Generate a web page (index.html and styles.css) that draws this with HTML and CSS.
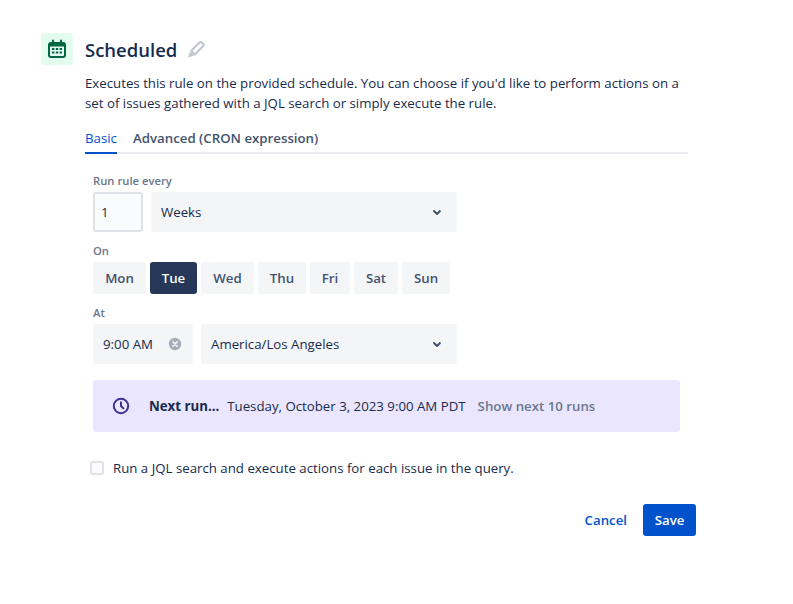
FILE: index.html
```html
<!DOCTYPE html>
<html lang="en">
<head>
<meta charset="utf-8">
<title>Scheduled</title>
<link rel="stylesheet" href="styles.css">
</head>
<body>
<main class="page">
  <header class="head">
    <div class="head-icon">
      <svg width="24" height="24" viewBox="0 0 24 24"><path fill="#006644" fill-rule="evenodd" d="M7 3.500a1 1 0 0 1 2 0V5h6V3.500a1 1 0 0 1 2 0V5h1a3 3 0 0 1 3 3v10a3 3 0 0 1-3 3H6a3 3 0 0 1-3-3V8a3 3 0 0 1 3-3h1V3.500zM5 9.500V18a1 1 0 0 0 1 1h12a1 1 0 0 0 1-1V9.500H5z"/><path fill="#006644" d="M7 11h2.400v2H7zM10.800 11h2.400v2h-2.400zM14.600 11H17v2h-2.400zM7 14.500h2.400v2H7zM10.800 14.500h2.400v2h-2.400zM14.600 14.500H17v2h-2.400z"/></svg>
    </div>
    <h1 class="title">Scheduled</h1>
    <svg class="pencil" width="18" height="18" viewBox="1 1.500 15 15"><path fill="none" stroke="#c1c7d0" stroke-width="1.800" stroke-linejoin="round" d="M4.500 10.500l7-7a1.200 1.200 0 0 1 1.700 0l1.300 1.300a1.200 1.200 0 0 1 0 1.700l-7 7z"/><path fill="#c1c7d0" d="M3.600 11l3.400 3.400-5.200 1.800z"/></svg>
  </header>
  <p class="desc">Executes this rule on the provided schedule. You can choose if you'd like to perform actions on a set of issues gathered with a JQL search or simply execute the rule.</p>
  <nav class="tabs">
    <span class="tab tab-active">Basic</span>
    <span class="tab">Advanced (CRON expression)</span>
  </nav>
  <section class="form">
    <div class="label label-first">Run rule every</div>
    <div class="row">
      <div class="num">1</div>
      <div class="select select-fill">Weeks
        <svg class="chev" width="24" height="24" viewBox="0 0 24 24"><path fill="#42526e" d="M8.300 10.300a1 1 0 0 1 1.400 0L12 12.600l2.300-2.300a1 1 0 0 1 1.400 1.400l-3 3a1 1 0 0 1-1.400 0l-3-3a1 1 0 0 1 0-1.400z"/></svg>
      </div>
    </div>
    <div class="label">On</div>
    <div class="days">
      <span class="day day-mon">Mon</span>
      <span class="day day-on">Tue</span>
      <span class="day day-wed">Wed</span>
      <span class="day day-thu">Thu</span>
      <span class="day day-fri">Fri</span>
      <span class="day day-sat">Sat</span>
      <span class="day day-sun">Sun</span>
    </div>
    <div class="label">At</div>
    <div class="row">
      <div class="select time">9:00 AM
        <svg class="clear" width="16" height="16" viewBox="0 0 16 16"><circle cx="8" cy="8" r="6.200" fill="#a5adba"/><path stroke="#f4f5f7" stroke-width="1.600" stroke-linecap="round" d="M5.900 5.900l4.200 4.200M10.100 5.900l-4.200 4.200"/></svg>
      </div>
      <div class="select select-fill">America/Los Angeles
        <svg class="chev" width="24" height="24" viewBox="0 0 24 24"><path fill="#42526e" d="M8.300 10.300a1 1 0 0 1 1.400 0L12 12.600l2.300-2.300a1 1 0 0 1 1.400 1.400l-3 3a1 1 0 0 1-1.400 0l-3-3a1 1 0 0 1 0-1.400z"/></svg>
      </div>
    </div>
    <div class="next">
      <svg class="clock" width="24" height="24" viewBox="0 0 24 24"><circle cx="12" cy="12" r="7.200" fill="none" stroke="#403294" stroke-width="2"/><path fill="none" stroke="#403294" stroke-width="2" stroke-linecap="round" stroke-linejoin="round" d="M12 8.200V12l2.400 2.400"/></svg>
      <strong class="next-label">Next run...</strong>
      <span class="next-date">Tuesday, October 3, 2023 9:00 AM PDT</span>
      <span class="next-link">Show next 10 runs</span>
    </div>
    <label class="check"><span class="box"></span>Run a JQL search and execute actions for each issue in the query.</label>
  </section>
  <footer class="actions">
    <span class="cancel">Cancel</span>
    <span class="save">Save</span>
  </footer>
</main>
</body>
</html>
```
FILE: styles.css
```css
* { box-sizing: border-box; }
html, body { margin: 0; padding: 0; background: #fff; }
body {
  font-family: "Open Sans", "Noto Sans", "Liberation Sans", sans-serif;
  font-size: 13.25px;
  line-height: 20px;
  color: #172b4d;
  width: 793px;
  height: 604px;
  overflow: hidden;
}
.page { padding: 33px 0 0 41px; width: 696px; }
.head { display: flex; align-items: center; height: 32px; }
.head-icon {
  width: 32px; height: 32px; background: #e3fcef; border-radius: 3px;
  display: flex; align-items: center; justify-content: center;
}
.title { margin: 2px 0 0 12px; font-size: 18.500px; line-height: 32px; font-weight: 600; color: #172b4d; }
.pencil { margin-left: 10px; }
.desc { margin: 8px 0 0 44px; width: 603px; }
.tabs { margin: 14px 0 0 44px; width: 603px; display: flex; gap: 16px; border-bottom: 2px solid #ebecf0; height: 27px; }
.tab { height: 27px; line-height: 22px; font-weight: 600; color: #42526e; white-space: nowrap; }
.tab-active { width: 32px; font-weight: 500; color: #0052cc; border-bottom: 2px solid #0052cc; }
.form { margin-left: 52px; width: 587px; }
.label { font-size: 11.250px; line-height: 16px; font-weight: 600; color: #6b778c; margin: 11px 0 3px; }
.label-first { margin-top: 19px; }
.row { display: flex; gap: 8px; width: 364px; }
.num {
  width: 50px; height: 40px; border: 2px solid #dfe1e6; border-radius: 3px;
  background: #fafbfc; padding: 0 6px; line-height: 36px;
}
.select {
  height: 40px; background: #f4f5f7; border-radius: 3px; padding: 0 10px;
  display: flex; align-items: center; justify-content: space-between;
}
.select-fill { flex: 1; padding-right: 8px; }
.time { width: 100px; padding-right: 10px; }
.days { display: flex; gap: 4px; }
.day {
  height: 32px; line-height: 32px; text-align: center; background: #f4f5f7;
  border-radius: 3px; font-weight: 600; color: #42526e;
}
.day-mon { width: 53px; }
.day-on { width: 47px; background: #253858; color: #fff; }
.day-wed { width: 53px; }
.day-thu { width: 48px; }
.day-fri { width: 40px; }
.day-sat { width: 44px; }
.day-sun { width: 48px; }
.next {
  margin-top: 16px; width: 587px; height: 52px; background: #eae6ff; border-radius: 3px;
  display: flex; align-items: center; padding-left: 16px;
}
.clock { flex: none; }
.next-label { margin-left: 16px; font-weight: 700; }
.next-date { margin-left: 8px; }
.next-link { margin-left: 12px; font-weight: 600; color: #6b778c; }
.check { display: flex; align-items: center; margin: 26px 0 0 -3px; color: #172b4d; }
.box {
  width: 14px; height: 14px; border: 2px solid #dfe1e6; border-radius: 3px;
  background: #fafbfc; margin-right: 9px;
}
.actions { display: flex; justify-content: flex-end; align-items: center; margin-top: 26px; gap: 16px; }
.cancel { font-weight: 600; color: #0052cc; }
.save {
  width: 53px; height: 32px; line-height: 32px; text-align: center; background: #0052cc;
  color: #fff; font-weight: 600; border-radius: 3px;
}
```
